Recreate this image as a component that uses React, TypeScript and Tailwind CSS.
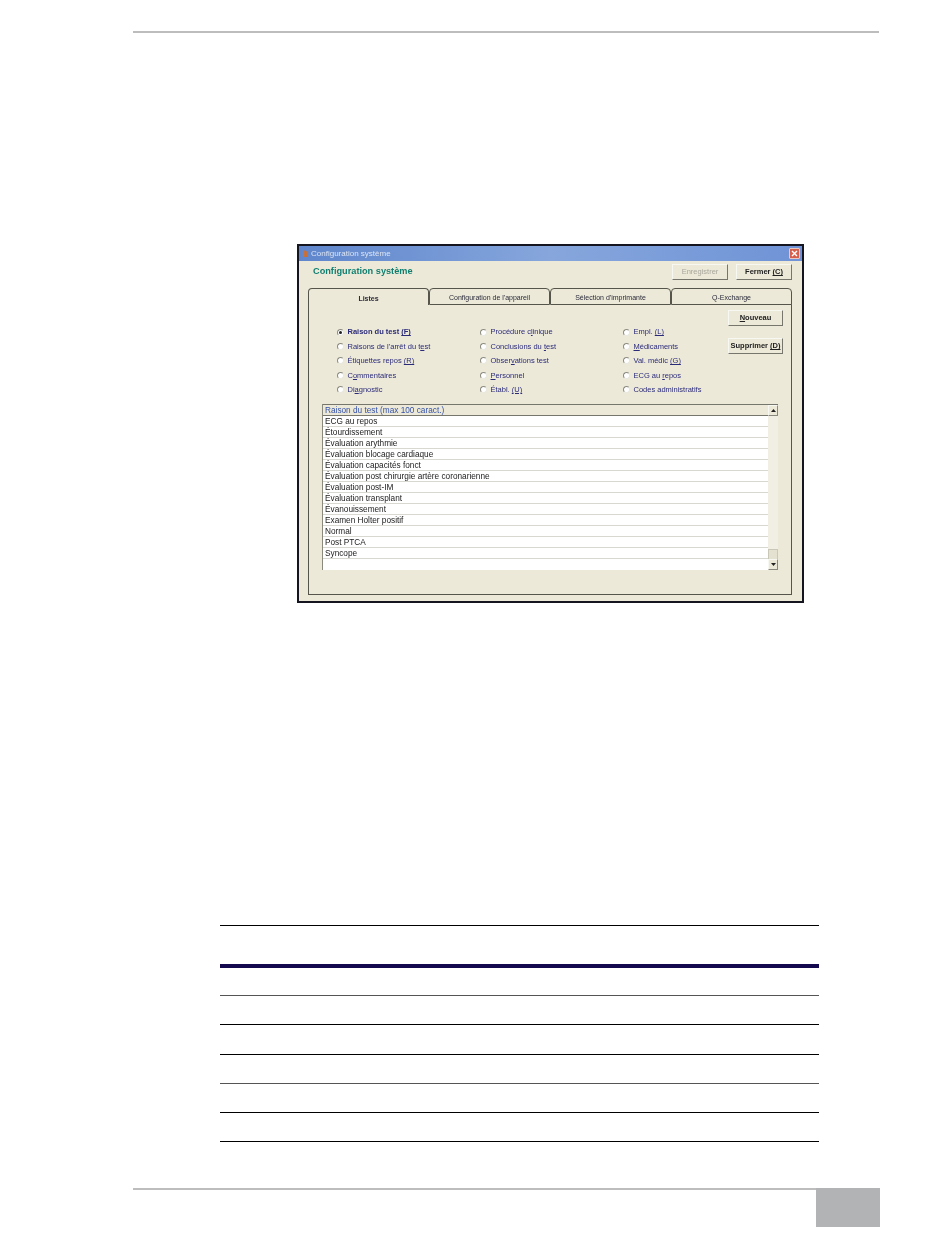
import React from "react";

const font = { fontFamily: '"Liberation Sans", Arial, sans-serif' };

function U({ children }: { children: React.ReactNode }) {
  return <span className="underline">{children}</span>;
}

function Radio({ on, children, bold }: { on?: boolean; bold?: boolean; children: React.ReactNode }) {
  return (
    <div className="flex h-[14.4px] items-center">
      <span className="flex h-[7px] w-[7px] shrink-0 items-center justify-center rounded-full border border-t-[#8a8a80] border-l-[#8a8a80] border-r-[#e8e8e0] border-b-[#e8e8e0] bg-white">
        {on && <span className="h-[3px] w-[3px] rounded-full bg-[#222]" />}
      </span>
      <span className={`ml-[3.5px] whitespace-nowrap text-[7.5px] leading-none text-[#2b2b7a] ${bold ? "font-bold text-[#1c1c70]" : ""}`}>
        {children}
      </span>
    </div>
  );
}

function Btn({ children, w, disabled }: { children: React.ReactNode; w: string; disabled?: boolean }) {
  return (
    <div
      className={`flex h-[16px] ${w} items-center justify-center border border-t-[#f8f8f2] border-l-[#f8f8f2] border-r-[#77766c] border-b-[#77766c] bg-[#ece9d8] text-[7.5px] font-bold leading-none ${disabled ? "font-normal text-[#a8a79c]" : "text-[#222]"}`}
    >
      {children}
    </div>
  );
}

const rows = [
  "ECG au repos",
  "Étourdissement",
  "Évaluation arythmie",
  "Évaluation blocage cardiaque",
  "Évaluation capacités fonct",
  "Évaluation post chirurgie artère coronarienne",
  "Évaluation post-IM",
  "Évaluation transplant",
  "Évanouissement",
  "Examen Holter positif",
  "Normal",
  "Post PTCA",
  "Syncope",
];

function Arrow({ up }: { up?: boolean }) {
  return (
    <div className="flex h-[11px] w-[10px] items-center justify-center border border-t-[#f8f8f2] border-l-[#f8f8f2] border-r-[#8a897e] border-b-[#8a897e] bg-[#ece9d8]">
      <svg width="5" height="3" viewBox="0 0 5 3">
        <path d={up ? "M2.5 0 L5 3 L0 3 Z" : "M0 0 L5 0 L2.5 3 Z"} fill="#222" />
      </svg>
    </div>
  );
}

function Tab({ children, first }: { children: React.ReactNode; first?: boolean }) {
  return (
    <div
      className={`flex h-[17px] w-[121px] items-center justify-center rounded-t-[4px] border border-[#55554c] pt-[2px] text-[7px] leading-none text-[#2b2b3a] ${
        first ? "border-b-0 bg-[#ece9d8] font-bold" : "bg-[#ece9d8]"
      }`}
    >
      {children}
    </div>
  );
}

function Window() {
  return (
    <div className="ml-[297px] h-[359px] w-[507px] border-2 border-[#15151f] bg-[#ece9d8] blur-[0.3px]">
      <div className="flex h-[15px] items-center bg-gradient-to-r from-[#5f86cc] via-[#86a6dc] to-[#6f93d6] pl-[3px] pr-[2px]">
        <svg width="7" height="9" viewBox="0 0 7 9" className="shrink-0">
          <path d="M1 8 L1 3 L3 1 L3 8 Z M4 8 L4 2 L6 3 L6 8 Z" fill="#c8703a" />
        </svg>
        <span className="ml-[2px] text-[8px] leading-none text-[#dbe4f4]">Configuration système</span>
        <div className="ml-auto flex h-[11px] w-[11px] items-center justify-center rounded-[1px] border border-[#e8c8c0] bg-[#d8604a]">
          <svg width="7" height="7" viewBox="0 0 7 7">
            <path d="M1 1 L6 6 M6 1 L1 6" stroke="#fff" strokeWidth="1.4" />
          </svg>
        </div>
      </div>

      <div className="flex h-[26px] items-start pl-[14px] pr-[10px] pt-[3px]">
        <h1 className="mt-[1px] text-[9.2px] font-bold leading-[13px] text-[#117f70]">Configuration système</h1>
        <div className="ml-auto flex gap-[8px]">
          <Btn w="w-[56px]" disabled>Enregistrer</Btn>
          <Btn w="w-[56px]">Fermer <span className="ml-[2px]"><U>(C)</U></span></Btn>
        </div>
      </div>

      <div className="ml-[9px] mt-[1px] w-[484px]">
        <div className="flex">
          <Tab first>Listes</Tab>
          <Tab>Configuration de l'appareil</Tab>
          <Tab>Sélection d'imprimante</Tab>
          <Tab>Q-Exchange</Tab>
        </div>
        <div className="-mt-px h-[291px] border border-t-0 border-[#55554c] pl-[13px] pr-[8px] pt-[6px]">
          <div className="flex h-[94px]">
            <div className="flex w-[406px] pl-[15px] pt-[15px]">
              <div className="w-[143px]">
                <Radio on bold>Raison du test <U>(F)</U></Radio>
                <Radio>Raisons de l'arrêt du t<U>e</U>st</Radio>
                <Radio>Étiquettes repos <U>(R)</U></Radio>
                <Radio>C<U>o</U>mmentaires</Radio>
                <Radio>Di<U>a</U>gnostic</Radio>
              </div>
              <div className="w-[143px]">
                <Radio>Procédure c<U>l</U>inique</Radio>
                <Radio>Conclusions du <U>t</U>est</Radio>
                <Radio>Obser<U>v</U>ations test</Radio>
                <Radio><U>P</U>ersonnel</Radio>
                <Radio>Établ. <U>(U)</U></Radio>
              </div>
              <div className="w-[100px]">
                <Radio>Empl. <U>(L)</U></Radio>
                <Radio><U>M</U>édicaments</Radio>
                <Radio>Val. médic <U>(G)</U></Radio>
                <Radio>ECG au <U>r</U>epos</Radio>
                <Radio>Codes administratifs</Radio>
              </div>
            </div>
            <div className="flex flex-col gap-[12px]">
              <Btn w="w-[55px]"><U>N</U>ouveau</Btn>
              <Btn w="w-[55px]">Supprimer <span className="ml-[2px]"><U>(D)</U></span></Btn>
            </div>
          </div>

          <div className="flex h-[166px] w-[456px] flex-col border-l border-[#8a897e]">
            <div className="flex h-[12px] shrink-0 items-center border-y border-[#77766c] bg-[#ece9d8]">
              <span className="pl-[2px] pt-[2px] text-[8.25px] leading-none text-[#3552a8]">Raison du test (max 100 caract.)</span>
              <div className="ml-auto"><Arrow up /></div>
            </div>
            <div className="flex min-h-0 flex-1">
              <div className="flex-1 bg-white">
                {rows.map((r) => (
                  <div key={r} className="flex h-[11px] items-center border-b border-[#d8d8d0] pl-[2px] pt-[2px] text-[8.25px] leading-none text-[#222]">
                    {r}
                  </div>
                ))}
              </div>
              <div className="flex w-[10px] flex-col justify-end bg-[#f1efe4]">
                <div className="h-[10px] border-x border-t border-[#c9c7b8] bg-[#e4e1d0]" />
                <Arrow />
              </div>
            </div>
          </div>
        </div>
      </div>
    </div>
  );
}

export default function App() {
  return (
    <div className="relative h-[1260px] w-[950px] overflow-hidden bg-white" style={font}>
      <div className="pt-[31px]">
        <div className="ml-[133px] h-[2px] w-[746px] bg-[#bdbdbd]" />
        <div className="mt-[211px]">
          <Window />
        </div>
        <div className="ml-[220px] mt-[322px] w-[599px]">
          <div className="h-[1px] bg-black" />
          <div className="mt-[38px] h-[4px] bg-[#14084f]" />
          <div className="mt-[27px] h-[1px] bg-[#555]" />
          <div className="mt-[28px] h-[1px] bg-black" />
          <div className="mt-[29px] h-[1px] bg-black" />
          <div className="mt-[28px] h-[1px] bg-[#555]" />
          <div className="mt-[28px] h-[1px] bg-black" />
          <div className="mt-[28px] h-[1px] bg-black" />
        </div>
        <div className="ml-[133px] mt-[46px] flex w-[747px] items-start">
          <div className="h-[2px] flex-1 bg-[#bdbdbd]" />
          <div className="h-[39px] w-[64px] bg-[#b2b3b5]" />
        </div>
      </div>
    </div>
  );
}
